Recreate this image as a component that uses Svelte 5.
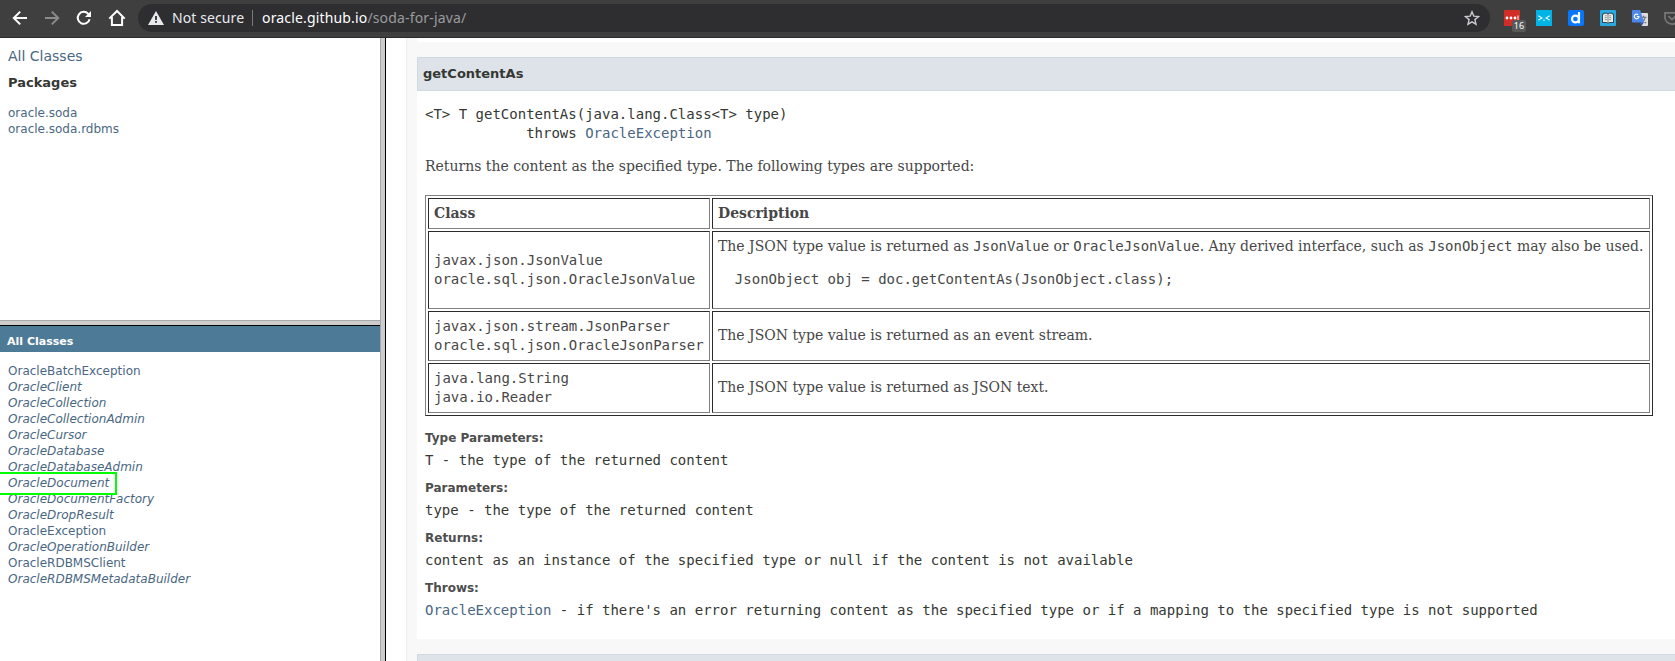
<script>
  const classes = [
    ['OracleBatchException', false],
    ['OracleClient', true],
    ['OracleCollection', true],
    ['OracleCollectionAdmin', true],
    ['OracleCursor', true],
    ['OracleDatabase', true],
    ['OracleDatabaseAdmin', true],
    ['OracleDocument', true],
    ['OracleDocumentFactory', true],
    ['OracleDropResult', true],
    ['OracleException', false],
    ['OracleOperationBuilder', true],
    ['OracleRDBMSClient', false],
    ['OracleRDBMSMetadataBuilder', true]
  ];
</script>

<div class="window">
  <header class="toolbar">
    <nav class="nav">
      <svg width="16" height="16" viewBox="0 0 16 16"><path d="M15 8H2.5M8.2 1.6 1.8 8l6.4 6.4" /></svg>
      <svg class="dim" width="16" height="16" viewBox="0 0 16 16"><path d="M1 8h12.5M7.8 1.6 14.2 8l-6.4 6.4" /></svg>
      <svg width="16" height="16" viewBox="0 0 16 16"><path d="M13.6 9.2A6 6 0 1 1 12.2 3.8L13.6 5.2" /><path class="solid" d="M15 1v6H9z" /></svg>
      <svg width="18" height="18" viewBox="0 0 18 18"><path d="M1.3 9.6 9 2l7.7 7.6M3.9 8v8.1h10.2V8" /></svg>
    </nav>
    <div class="address">
      <svg class="warn" width="16" height="14" viewBox="0 0 16 14"><path d="M8 0 16 14H0z" fill="#e8eaed" /><path d="M7.1 5h1.8v4H7.1zM7.1 10h1.8v1.8H7.1z" fill="#2e2e31" /></svg>
      <span class="secure">Not secure</span>
      <span class="sep"></span>
      <span class="url">oracle.github.io<span class="path">/soda-for-java/</span></span>
      <svg class="star" width="16" height="16" viewBox="0 0 16 16"><path d="m8 1.8 1.8 4.3 4.7.4-3.6 3.1 1.1 4.6L8 11.8l-4 2.4 1.1-4.6-3.6-3.1 4.7-.4z" fill="none" stroke="#c8cacd" stroke-width="1.4" /></svg>
    </div>
    <div class="extensions">
      <div class="ext red">
        <svg width="16" height="16" viewBox="0 0 16 16"><rect width="16" height="16" rx="1" fill="#d32d27" /><circle cx="3" cy="8" r="1.4" fill="#fff" /><circle cx="7" cy="8" r="1.4" fill="#fff" /><circle cx="11" cy="8" r="1.4" fill="#fff" /><path d="M14 5.5V10" stroke="#fff" /></svg>
        <span class="badge">16</span>
      </div>
      <svg width="16" height="16" viewBox="0 0 16 16"><rect width="16" height="16" fill="#00b3e6" /><path d="m2.3 5.7 3.6 2.2-3.6 2.2M13.7 5.7l-3.6 2.2 3.6 2.2" fill="none" stroke="#fff" stroke-width="1.1" /><path d="M7.3 9.4h1.4v1.4H7.3z" fill="#fff" /></svg>
      <svg width="16" height="16" viewBox="0 0 16 16"><rect width="16" height="16" rx="2" fill="#0877ff" /><circle cx="7.4" cy="9" r="3.4" fill="none" stroke="#fff" stroke-width="2.1" /><path d="M11 2v11.3" stroke="#fff" stroke-width="2.1" /></svg>
      <svg width="16" height="16" viewBox="0 0 16 16"><rect width="16" height="16" rx="1" fill="#27a9e1" /><path d="M2.5 4.2h1V3.4Q6.5 2.6 8 4q1.5-1.4 4.5-.6v.8h1v8.3H9.2L8 13.3l-1.2-.8H2.5z" fill="#f1f1ec" stroke="#2e4250" stroke-width="1" /><path d="M8 4v8M4.8 5.8h1.9M4.8 7.7h1.9M4.8 9.6h1.9M9.3 5.8h1.9M9.3 7.7h1.9M9.3 9.6h1.9" stroke="#606c72" stroke-width=".8" /></svg>
      <svg width="16" height="16" viewBox="0 0 16 16"><path d="M7 3h8.2q.8 0 .8.8V15q0 1-.8 1H10z" fill="#dcdcdc" /><path d="M8.5 7.2h6M11.5 5.8v1.4M13.3 7.2q-.8 3.8-4 5.7M9.8 8.2q1.6 3.4 4.3 4.8" fill="none" stroke="#667078" stroke-width="1.1" /><path d="M1 0h7.2L12 12.5H1q-1 0-1-1V1q0-1 1-1z" fill="#4d86ec" /><path d="m7.5 12.5 4.5 0L9.5 16z" fill="#3057b5" /><path d="M6.2 4.8A2.3 2.3 0 1 0 6.9 6.5H4.8" fill="none" stroke="#fff" stroke-width="1.2" /></svg>
      <svg width="16" height="16" viewBox="0 0 16 16"><path d="M1 2.8h14v4.7a7 6.6 0 0 1-14 0z" fill="none" stroke="#777" stroke-width="1.7" /><path d="M4.5 6.2 8 9.6l3.5-3.4" fill="none" stroke="#777" stroke-width="1.8" /></svg>
    </div>
  </header>

  <div class="frames">
    <aside class="side">
      <section class="packages">
        <a class="all" href="#all">All Classes</a>
        <h2>Packages</h2>
        <ul>
          <li><a href="#soda">oracle.soda</a></li>
          <li><a href="#rdbms">oracle.soda.rdbms</a></li>
        </ul>
      </section>
      <section class="classes">
        <h1>All Classes</h1>
        <ul>
          {#each classes as [name, italic]}
            <li class:marked={name === 'OracleDocument'}><a class:italic href="#{name}">{name}</a></li>
          {/each}
        </ul>
      </section>
    </aside>

    <main>
      <div class="details">
        <div class="previous"></div>
        <article>
          <h4>getContentAs</h4>
          <div class="body">
            <pre>&lt;T&gt; T getContentAs(java.lang.Class&lt;T&gt; type)</pre>
            <pre class="throws">throws <a href="#ex">OracleException</a></pre>
            <p>Returns the content as the specified type. The following types are supported:</p>
            <table>
              <tbody>
                <tr class="head"><th>Class</th><th>Description</th></tr>
                <tr class="tall">
                  <td><code>javax.json.JsonValue<br />oracle.sql.json.OracleJsonValue</code></td>
                  <td class="top">
                    <div class="line">The JSON type value is returned as <code>JsonValue</code> or <code>OracleJsonValue</code>. Any derived interface, such as <code>JsonObject</code> may also be used.</div>
                    <pre class="sample">  JsonObject obj = doc.getContentAs(JsonObject.class);</pre>
                  </td>
                </tr>
                <tr class="pair">
                  <td><code>javax.json.stream.JsonParser<br />oracle.sql.json.OracleJsonParser</code></td>
                  <td>The JSON type value is returned as an event stream.</td>
                </tr>
                <tr class="pair">
                  <td><code>java.lang.String<br />java.io.Reader</code></td>
                  <td>The JSON type value is returned as JSON text.</td>
                </tr>
              </tbody>
            </table>
            <dl>
              <dt>Type Parameters:</dt>
              <dd>T - the type of the returned content</dd>
              <dt>Parameters:</dt>
              <dd>type - the type of the returned content</dd>
              <dt>Returns:</dt>
              <dd>content as an instance of the specified type or null if the content is not available</dd>
              <dt>Throws:</dt>
              <dd><a href="#ex">OracleException</a> - if there's an error returning content as the specified type or if a mapping to the specified type is not supported</dd>
            </dl>
          </div>
        </article>
        <div class="next"></div>
      </div>
    </main>
  </div>
</div>

<style>
  :global(body) { margin: 0; overflow: hidden; }
  .window {
    width: 1675px; height: 661px; overflow: hidden;
    display: flex; flex-direction: column;
    font-family: "DejaVu Sans", sans-serif; color: #353833; background: #fff;
  }
  ul, h1, h2, h4, p, pre, dl, dd { margin: 0; padding: 0; }
  ul { list-style: none; }
  a { color: #4a6782; text-decoration: none; }
  svg { display: block; flex: none; }

  .toolbar {
    box-sizing: border-box; height: 38px; flex: none;
    display: flex; align-items: flex-start;
    background: #3f3f3f; border-bottom: 1px solid #2a2a2b;
    font: 14px/28px "Noto Sans", sans-serif;
  }
  .nav { display: flex; align-items: center; gap: 16px; height: 36px; padding-left: 12px; width: 126px; }
  .nav svg { fill: none; stroke: #fff; stroke-width: 2; }
  .nav .solid { fill: #fff; stroke: none; }
  .nav .dim { stroke: #8b8b8b; }
  .address {
    box-sizing: border-box; width: 1352px; height: 28px; margin-top: 4px; padding: 0 10px;
    border-radius: 14px; background: #2e2e31; color: #e8eaed;
    display: flex; align-items: center; white-space: nowrap;
  }
  .secure { width: 80px; margin-left: 8px; letter-spacing: 0.1px; }
  .sep { width: 1px; height: 16px; background: #77797c; margin-right: 9px; }
  .url { flex: 1; color: #fff; letter-spacing: 0.16px; }
  .path { color: #9a9b9e; }
  .extensions { display: flex; gap: 16px; margin: 10px 0 0 14px; width: 171px; }
  .ext { position: relative; }
  .badge {
    position: absolute; left: 8px; top: 10px; width: 14px; height: 12px;
    border-radius: 2px; background: #585858; color: #fff;
    font: 9px/12px "Noto Sans", sans-serif; text-align: center;
  }

  .frames { flex: 1; display: flex; min-height: 0; }
  .side {
    width: 380px; flex: none; display: flex; flex-direction: column;
    border-right: 1px solid #a8a8a8; box-shadow: 4px 0 #ccc, 5px 0 #000; margin-right: 5px;
  }
  .packages { box-sizing: border-box; height: 282px; padding: 9px 8px 0; flex: none; }
  .all { display: block; font-size: 14px; line-height: 18px; }
  h2 { font-size: 13px; line-height: 16px; margin-top: 10px; }
  .packages ul { margin-top: 14px; }
  li { font-size: 12px; line-height: 16px; }
  .classes { border-top: 1px solid #a8a8a8; background: #ccc; flex: 1; }
  h1 {
    height: 26px; margin-top: 4px; padding-left: 7px;
    border-top: 1px solid #000; background: #4d7a97; color: #fff;
    font-size: 11px; line-height: 32px;
  }
  .classes ul { background: #fff; padding: 11px 8px 0; height: 298px; }
  .italic { font-style: italic; }
  .marked { position: relative; }
  .marked::after {
    content: ""; position: absolute; box-sizing: border-box;
    left: -8px; top: -3px; width: 117px; height: 23px;
    border: 2px solid #0f0; border-left: 0;
  }

  main { flex: 1; min-width: 0; padding-left: 20px; }
  .details { border-left: 1px solid #ededed; background: #f8f8f8; padding-left: 10px; height: 100%; }
  .previous { height: 4px; background: #fff; }
  article { margin-top: 15px; }
  h4, .next { box-sizing: border-box; height: 34px; background: #dee3e9; border: 1px solid #d0d9e0; border-right: 0; }
  h4 { padding-left: 5px; font-size: 13px; line-height: 32px; }
  .next { margin-top: 15px; }
  .body { background: #fff; padding: 14px 0 19px 8px; }
  pre, code, dd { font: 14px/19px "DejaVu Sans Mono", monospace; }
  .throws { padding-left: 12ch; }
  p, td, th { font: 14px/19px "DejaVu Serif", serif; color: #474747; }
  p { margin-top: 14px; }
  table {
    box-sizing: border-box; width: 1228px; height: 221px; margin-top: 19px;
    border: 1px solid; border-color: #808080 #2c2c2c #2c2c2c #808080;
    border-collapse: separate; border-spacing: 2px; table-layout: fixed;
  }
  th, td {
    box-sizing: border-box; padding: 0 5px; text-align: left; white-space: nowrap;
    border: 1px solid; border-color: #2c2c2c #808080 #808080 #2c2c2c;
  }
  th { font-weight: bold; }
  th:first-child { width: 282px; }
  .head th { height: 31px; }
  .tall td { height: 78px; }
  .pair td { height: 50px; }
  .pair td:last-child { padding-bottom: 1px; }
  .top { vertical-align: top; padding-top: 5px; }
  .line { height: 19px; }
  .sample { margin-top: 14px; }
  dl { margin-top: 14px; }
  dt { font-size: 12px; line-height: 16px; font-weight: bold; color: #4e4e4e; }
  dd { margin: 5px 0 10px; white-space: nowrap; }
  dd:last-child { margin-bottom: 0; }
</style>
